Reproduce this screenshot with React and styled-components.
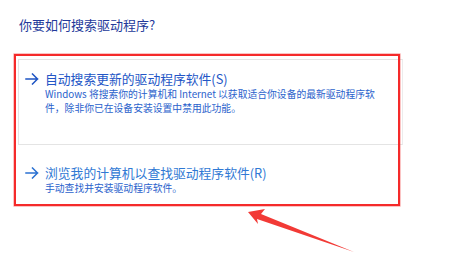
import styled, { createGlobalStyle } from "styled-components";

const GlobalStyle = createGlobalStyle`
  html, body {
    margin: 0;
    padding: 0;
    background: #ffffff;
  }
  body {
    font-family: "Noto Sans CJK SC", "Noto Sans", sans-serif;
  }
`;

const OPTIONS = [
  {
    id: "auto",
    title: "自动搜索更新的驱动程序软件(S)",
    lines: [
      "Windows 将搜索你的计算机和 Internet 以获取适合你设备的最新驱动程序软",
      "件，除非你已在设备安装设置中禁用此功能。",
    ],
    hover: true,
  },
  {
    id: "browse",
    title: "浏览我的计算机以查找驱动程序软件(R)",
    lines: ["手动查找并安装驱动程序软件。"],
    hover: false,
  },
];

function ArrowIcon() {
  return (
    <svg width="14" height="12" viewBox="0 0 14 12" fill="none">
      <path
        d="M1 6H12.5M7.5 1L12.5 6L7.5 11"
        stroke="currentColor"
        strokeWidth="1.5"
        strokeLinecap="square"
      />
    </svg>
  );
}

export default function App() {
  return (
    <Page>
      <GlobalStyle />
      <Title>你要如何搜索驱动程序?</Title>

      <Options>
        {OPTIONS.map((o) => (
          <Option key={o.id} $hover={o.hover}>
            <ArrowCell $hover={o.hover}>
              <ArrowIcon />
            </ArrowCell>
            <Body>
              <Heading $hover={o.hover}>{o.title}</Heading>
              <Desc>
                {o.lines.map((l) => (
                  <DescLine key={l}>{l}</DescLine>
                ))}
              </Desc>
            </Body>
          </Option>
        ))}

        <Highlight />
      </Options>

      <Pointer width="455" height="261" viewBox="0 0 455 261">
        <polygon
          points="248,212 265,209 261,214 354,252 257,219 258,224"
          fill="#f23a36"
        />
      </Pointer>
    </Page>
  );
}

/* ================= styles ================= */

const Page = styled.div`
  position: relative;
  width: 455px;
  height: 261px;
  padding: 16px 0 0 19px;
  box-sizing: border-box;
  overflow: hidden;
`;

const Title = styled.h1`
  margin: 0;
  font-size: 13px;
  line-height: 18px;
  font-weight: 400;
  color: #23399a;
`;

const Options = styled.div`
  position: relative;
  width: 385px;
  margin: 25px 0 0 -1px;
  display: flex;
  flex-direction: column;
  gap: 8px;
`;

const Option = styled.div`
  display: grid;
  grid-template-columns: 14px 1fr;
  column-gap: 6px;
  align-items: start;
  min-height: ${(p) => (p.$hover ? "73px" : "40px")};
  padding: 11px 6px 0;
  border: 1px solid ${(p) => (p.$hover ? "#e4e4e4" : "transparent")};
  border-right-color: ${(p) => (p.$hover ? "#ececec" : "transparent")};
`;

const ArrowCell = styled.div`
  height: 16px;
  display: flex;
  align-items: center;
  color: ${(p) => (p.$hover ? "#1f55c4" : "#2b72d2")};
`;

const Body = styled.div`
  min-width: 0;
`;

const Heading = styled.div`
  font-size: 12.8px;
  line-height: 16px;
  color: ${(p) => (p.$hover ? "#2356c6" : "#3079d4")};
  white-space: nowrap;
`;

const Desc = styled.div`
  font-size: 9.8px;
  line-height: 14px;
  color: #2a62cc;
`;

const DescLine = styled.div`
  white-space: nowrap;
`;

const Highlight = styled.div`
  position: absolute;
  left: -4px;
  top: -5px;
  width: 386px;
  height: 152px;
  box-sizing: border-box;
  border: 2px solid #f52a2a;
  box-shadow: 0 0 0 0.6px rgba(245, 60, 60, 0.5);
  pointer-events: none;
`;

const Pointer = styled.svg`
  position: absolute;
  left: 0;
  top: 0;
  pointer-events: none;
`;
